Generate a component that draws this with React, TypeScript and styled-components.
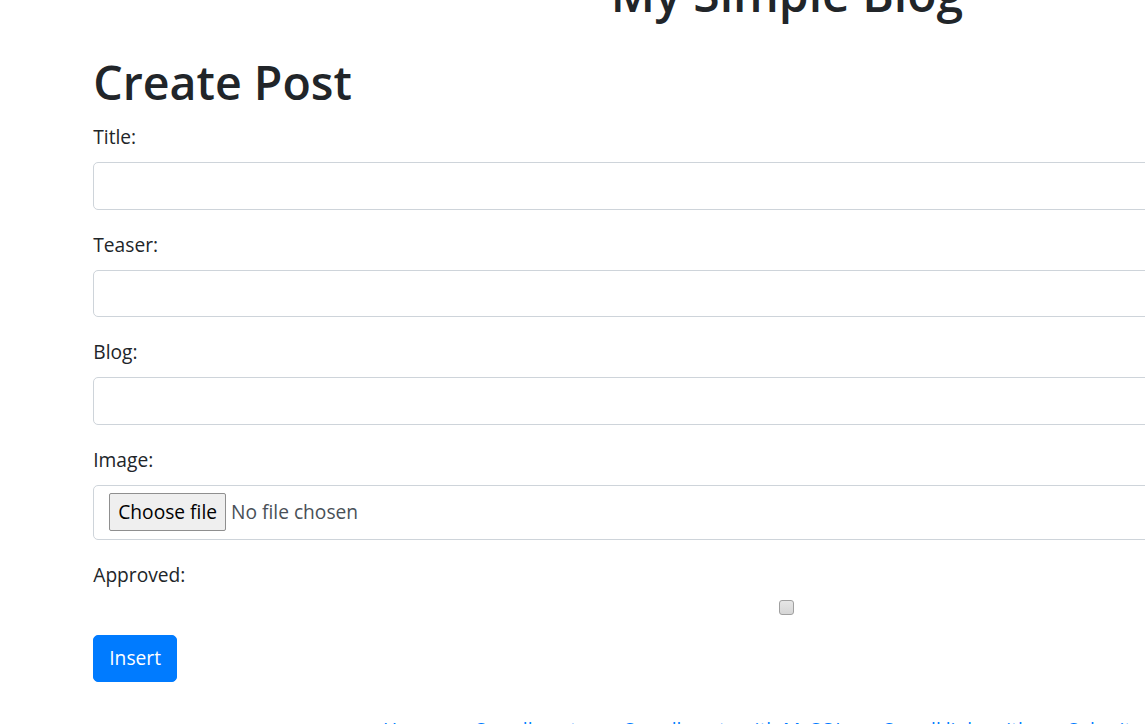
import React from "react";
import styled, { createGlobalStyle } from "styled-components";

const Global = createGlobalStyle`
  *, *::before, *::after { box-sizing: border-box; }
  html, body { margin: 0; padding: 0; overflow: hidden; background: #fff; }
  body {
    font-family: "Open Sans", "Noto Sans", sans-serif;
    font-size: 19.2px;
    line-height: 30px;
    color: #212529;
  }
`;

const Page = styled.div`
  width: 1574px;
  margin-top: -36px;
`;

const Container = styled.div`
  width: 1425px;
  margin: 0 auto;
  padding: 0 18.75px;
`;

const SiteTitle = styled.h1`
  margin: 0 0 28px;
  font-size: 48px;
  font-weight: 600;
  line-height: 60px;
  text-align: center;
`;

const PageTitle = styled.h1`
  margin: 0 0 10px;
  font-size: 46.5px;
  font-weight: 600;
  line-height: 60px;
`;

const Form = styled.form`
  display: block;
`;

const Group = styled.div`
  margin-bottom: 20px;
`;

const Label = styled.label`
  display: block;
  margin-bottom: 10px;
`;

const TextInput = styled.input`
  display: block;
  width: 100%;
  height: 47.5px;
  padding: 7.5px 15px;
  font: inherit;
  color: #495057;
  background: #fff;
  border: 1px solid #ced4da;
  border-radius: 5px;
  outline: none;
`;

const FileBox = styled.div`
  display: flex;
  align-items: center;
  gap: 5px;
  width: 100%;
  padding: 7.5px 15px;
  border: 1px solid #ced4da;
  border-radius: 5px;
  background: #fff;
`;

const FileButton = styled.button`
  font: inherit;
  line-height: 30px;
  padding: 3px 8px;
  color: #000;
  background: #efefef;
  border: 1px solid #8f8f8f;
  border-radius: 2px;
`;

const FileStatus = styled.span`
  color: #495057;
`;

const CheckRow = styled.div`
  display: flex;
  justify-content: center;
`;

const Check = styled.input`
  appearance: none;
  width: 15px;
  height: 15px;
  margin: 0 0 0 -2px;
  border: 1px solid #a0a0a0;
  border-radius: 3px;
  background: linear-gradient(#e6e6e6, #d6d6d6);
`;

const SubmitButton = styled.button`
  font: inherit;
  line-height: 30px;
  padding: 7.5px 15px;
  color: #fff;
  background: #007bff;
  border: 1px solid #007bff;
  border-radius: 5px;
`;

const Nav = styled.nav`
  display: flex;
  justify-content: center;
  gap: 38px;
  margin-top: 33px;
`;

const NavLink = styled.a`
  color: #007bff;
  text-decoration: none;
  white-space: nowrap;
`;

export default function App() {
  return (
    <>
      <Global />
      <Page>
        <Container>
          <SiteTitle>My Simple Blog</SiteTitle>
          <PageTitle>Create Post</PageTitle>
          <Form onSubmit={(e) => e.preventDefault()}>
            <Group>
              <Label htmlFor="title">Title:</Label>
              <TextInput id="title" type="text" />
            </Group>
            <Group>
              <Label htmlFor="teaser">Teaser:</Label>
              <TextInput id="teaser" type="text" />
            </Group>
            <Group>
              <Label htmlFor="blog">Blog:</Label>
              <TextInput id="blog" type="text" />
            </Group>
            <Group>
              <Label>Image:</Label>
              <FileBox>
                <FileButton type="button">Choose file</FileButton>
                <FileStatus>No file chosen</FileStatus>
              </FileBox>
            </Group>
            <Group>
              <Label htmlFor="approved">Approved:</Label>
              <CheckRow>
                <Check id="approved" type="checkbox" />
              </CheckRow>
            </Group>
            <SubmitButton type="submit">Insert</SubmitButton>
          </Form>
          <Nav>
            <NavLink href="#">Home</NavLink>
            <NavLink href="#">See all posts</NavLink>
            <NavLink href="#">See all posts with MySQL</NavLink>
            <NavLink href="#">See all links with</NavLink>
            <NavLink href="#">Submit a post</NavLink>
          </Nav>
        </Container>
      </Page>
    </>
  );
}
